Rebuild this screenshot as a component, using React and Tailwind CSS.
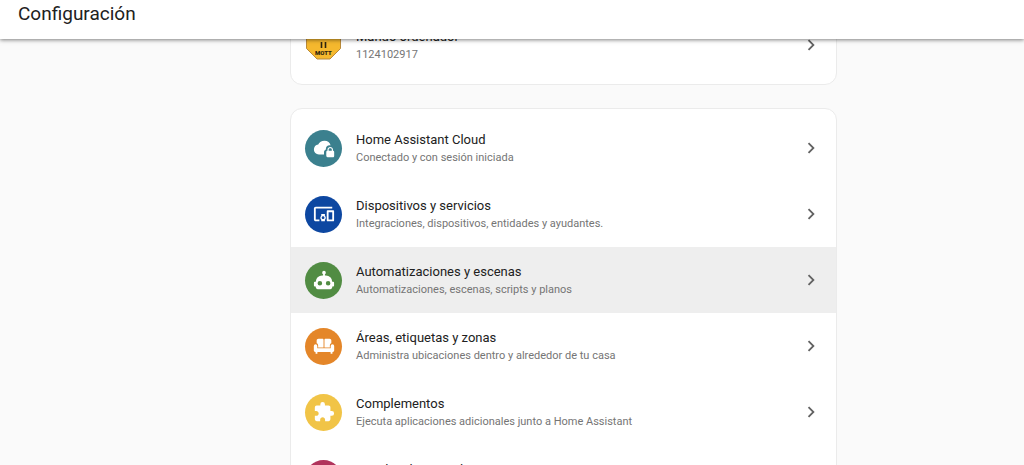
import React from "react";

const icons = {
  cloud: (
    <>
      <path d="M12 16.500c0-1.300.9-2.400 2-2.800V13c0-2.300 1.800-4 4-4 .4 0 .8 0 1.200.2C18.600 6.200 16 4 12.500 4 9.400 4 6.800 5.700 5.700 8.300 2.900 8.600 1 10.900 1 13.700 1 16.900 3.400 19 6.500 19H12z" />
      <path d="M21.800 15v-1.500c0-1.600-1.500-2.700-3-2.700s-3 1.100-3 2.700V15c-.7 0-1.300.6-1.300 1.300v4.200c0 .8.600 1.500 1.300 1.500h6c.7 0 1.300-.7 1.300-1.400v-4.200c0-.8-.6-1.400-1.300-1.400zm-1.300 0h-3.400v-1.500c0-.8.800-1.300 1.700-1.300s1.700.5 1.700 1.300z" />
    </>
  ),
  devices: (
    <path d="M3 6H21V4H3C1.900 4 1 4.900 1 6V18C1 19.100 1.900 20 3 20H7V18H3V6M13 12H9V13.780C8.390 14.330 8 15.110 8 16C8 16.890 8.390 17.670 9 18.220V20H13V18.220C13.610 17.670 14 16.880 14 16S13.610 14.330 13 13.780V12M11 17.500C10.170 17.500 9.500 16.830 9.500 16S10.170 14.500 11 14.500 12.500 15.170 12.500 16 11.830 17.500 11 17.500M22 8H16C15.500 8 15 8.500 15 9V19C15 19.500 15.500 20 16 20H22C22.500 20 23 19.500 23 19V9C23 8.500 22.500 8 22 8M21 18H17V10H21V18Z" />
  ),
  robot: (
    <path d="M12,2A2,2 0 0,1 14,4C14,4.740 13.600,5.390 13,5.730V7H14A7,7 0 0,1 21,14H22A1,1 0 0,1 23,15V18A1,1 0 0,1 22,19H21V20A2,2 0 0,1 19,22H5A2,2 0 0,1 3,20V19H2A1,1 0 0,1 1,18V15A1,1 0 0,1 2,14H3A7,7 0 0,1 10,7H11V5.730C10.400,5.390 10,4.740 10,4A2,2 0 0,1 12,2M7.500,13A2.500,2.500 0 0,0 5,15.500A2.500,2.500 0 0,0 7.500,18A2.500,2.500 0 0,0 10,15.500A2.500,2.500 0 0,0 7.500,13M16.500,13A2.500,2.500 0 0,0 14,15.500A2.500,2.500 0 0,0 16.500,18A2.500,2.500 0 0,0 19,15.500A2.500,2.500 0 0,0 16.500,13Z" />
  ),
  sofa: (
    <>
      <path d="M6 4h4.200c.8 0 1.300.5 1.300 1.300v8.200H5.600v-2c0-1.200-.6-2-1.600-2.400V6c0-1.200.8-2 2-2z" />
      <path d="M18 4h-4.200c-.8 0-1.300.5-1.300 1.300v8.200h5.900v-2c0-1.200.6-2 1.600-2.400V6c0-1.200-.8-2-2-2z" />
      <path d="M2.800 10a1.900 1.900 0 0 1 1.900 1.900v2.600h14.600v-2.600a1.900 1.900 0 1 1 3.800 0V17c0 .8-.7 1.500-1.500 1.500h-.4v2h-2v-2H4.800v2h-2v-2h-.4c-.8 0-1.500-.7-1.500-1.500v-5.100a1.900 1.900 0 0 1 1.900-1.900z" />
    </>
  ),
  puzzle: (
    <path d="M20.500,11H19V7C19,5.890 18.100,5 17,5H13V3.500A2.500,2.500 0 0,0 10.500,1A2.500,2.500 0 0,0 8,3.500V5H4A2,2 0 0,0 2,7V10.800H3.500C5,10.800 6.200,12 6.200,13.500C6.200,15 5,16.200 3.500,16.200H2V20A2,2 0 0,0 4,22H7.800V20.500C7.800,19 9,17.800 10.500,17.800C12,17.800 13.200,19 13.200,20.500V22H17A2,2 0 0,0 19,20V16H20.500A2.500,2.500 0 0,0 23,13.500A2.500,2.500 0 0,0 20.500,11Z" />
  ),
  dashboard: <path d="M13 3v6h8V3m-8 18h8V11h-8M3 21h8v-6H3m0-2h8V3H3v10z" />,
};

const sections = [
  { title: "Home Assistant Cloud", detail: "Conectado y con sesión iniciada", icon: "cloud", color: "bg-[#3b808e]" },
  { title: "Dispositivos y servicios", detail: "Integraciones, dispositivos, entidades y ayudantes.", icon: "devices", color: "bg-[#0d47a1]" },
  { title: "Automatizaciones y escenas", detail: "Automatizaciones, escenas, scripts y planos", icon: "robot", color: "bg-[#518c43]", active: true },
  { title: "Áreas, etiquetas y zonas", detail: "Administra ubicaciones dentro y alrededor de tu casa", icon: "sofa", color: "bg-[#e48629]" },
  { title: "Complementos", detail: "Ejecuta aplicaciones adicionales junto a Home Assistant", icon: "puzzle", color: "bg-[#f1c447]" },
  { title: "Paneles de control", detail: "", icon: "dashboard", color: "bg-[#b1345c]" },
];

const MottLogo = () => (
  <svg viewBox="0 0 37 37" className="size-[37px] shrink-0">
    <path d="M12 -1.500H25L35.500 9V21.500L25 32H12L1.500 21.500V9Z" fill="#f5b82e" stroke="#b98a3a" strokeWidth="1" />
    <path d="M16.500 15v6M20.500 15v6" stroke="#2d2410" strokeWidth="1.600" />
    <text x="18.500" y="28" textAnchor="middle" fontFamily="Roboto, sans-serif" fontWeight="900" fontSize="6" fill="#2d2410">
      MOTT
    </text>
  </svg>
);

const Row = ({ title, detail, active, children }) => (
  <li>
    <a href="#" className={`flex h-[66px] items-center px-3.5 ${active ? "bg-[#eeeeee]" : ""}`}>
      {children}
      <span className="ml-3.5 flex-1 pt-0.5">
        <span className="block text-[13px] leading-[18px] text-[#212121]">{title}</span>
        <span className="block min-h-[18px] text-[11px] leading-[18px] text-[#757575]">{detail}</span>
      </span>
      <svg viewBox="0 0 24 24" className="size-[22px] shrink-0 fill-[#626262]">
        <path d="M8.590,16.580L13.170,12L8.590,7.410L10,6L16,12L10,18L8.590,16.580Z" />
      </svg>
    </a>
  </li>
);

const App = () => {
  return (
    <div className="flex h-screen flex-col overflow-hidden bg-[#fafafa] font-[Roboto,sans-serif]">
      <header className="z-10 flex h-[39px] shrink-0 items-start bg-white px-[18px] shadow-[0_1px_4px_rgba(0,0,0,0.5)]">
        <h1 className="text-[19px] leading-7 text-[#212121]">Configuración</h1>
      </header>

      <main className="flex justify-center pl-[103px]">
        <div className="-mt-[34px] flex w-full max-w-[547px] flex-col gap-[23px]">
          <ul className="rounded-xl border border-[#ebebeb] bg-white py-1.5">
            <Row title="Mando ordenador" detail="1124102917">
              <MottLogo />
            </Row>
          </ul>

          <ul className="rounded-xl border border-[#ebebeb] bg-white py-1.5">
            {sections.map((section) => (
              <Row key={section.title} {...section}>
                <span className={`flex size-[37px] shrink-0 items-center justify-center rounded-full ${section.color}`}>
                  <svg viewBox="0 0 24 24" className="size-[22px] fill-white">
                    {icons[section.icon]}
                  </svg>
                </span>
              </Row>
            ))}
          </ul>
        </div>
      </main>
    </div>
  );
};

export default App;
